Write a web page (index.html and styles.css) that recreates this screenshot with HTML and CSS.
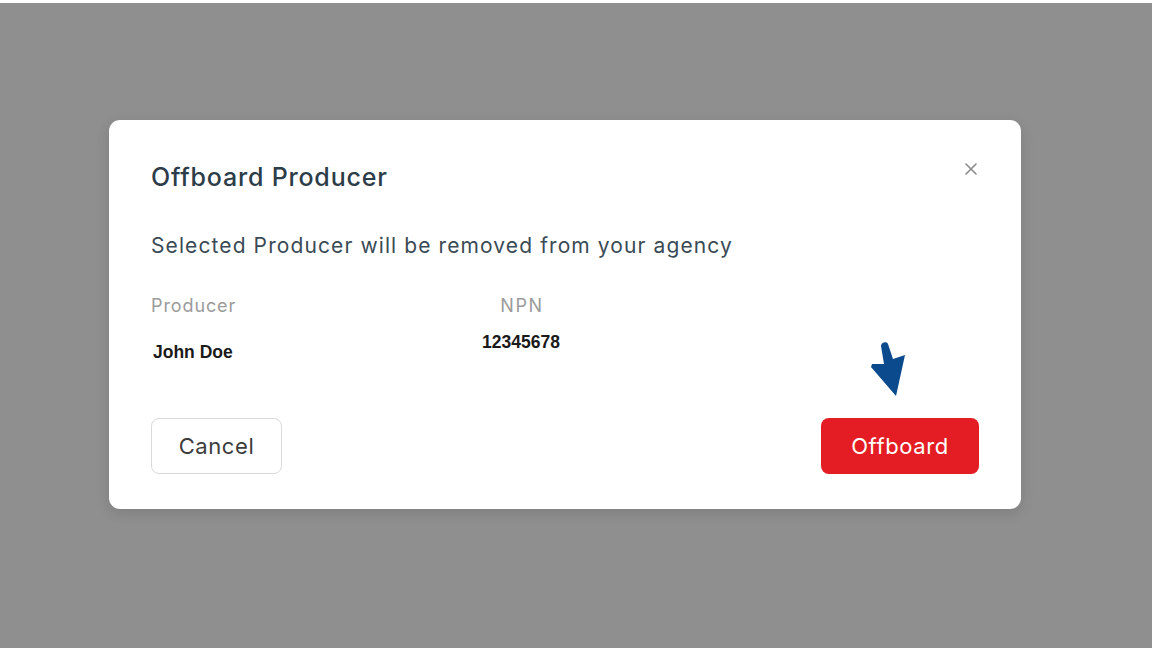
FILE: index.html
```html
<!DOCTYPE html>
<html lang="en">
<head>
<meta charset="utf-8">
<title>Offboard Producer</title>
<link rel="stylesheet" href="styles.css">
</head>
<body>
<div class="overlay">
  <div class="modal">
    <div class="modal-head">
      <h1 class="title">Offboard Producer</h1>
      <span class="close" aria-label="Close">
        <svg width="12" height="12" viewBox="0 0 12 12"><path d="M1 1L11 11M11 1L1 11" stroke="#8a8a8a" stroke-width="1.6" stroke-linecap="round"/></svg>
      </span>
    </div>
    <p class="subtitle">Selected Producer will be removed from your agency</p>
    <div class="info">
      <div class="col col-producer">
        <div class="label">Producer</div>
        <div class="value value-name">John Doe</div>
      </div>
      <div class="col col-npn">
        <div class="label">NPN</div>
        <div class="value value-npn">12345678</div>
      </div>
    </div>
    <div class="actions">
      <button class="btn btn-cancel">Cancel</button>
      <button class="btn btn-offboard">Offboard</button>
      <svg class="pointer" width="40" height="60" viewBox="0 0 40 60"><path d="M12 5 C12 1 18 0 19 3 L24 18 L36 14 L27 55 L2 26 L3 23 L15 23 Z" fill="#0b4a8c"/></svg>
    </div>
  </div>
</div>
</body>
</html>
```

FILE: styles.css
```css
* { box-sizing: border-box; }
html, body { margin: 0; padding: 0; }
body {
  background: #ffffff;
  font-family: "Inter", "Open Sans", sans-serif;
}
.overlay {
  margin-top: 3px;
  height: 645px;
  background: #8f8f8f;
  padding-top: 117px;
  padding-left: 109px;
}
.modal {
  width: 912px;
  height: 389px;
  background: #ffffff;
  border-radius: 11px;
  box-shadow: 0 4px 14px rgba(0,0,0,0.12);
  padding: 40px 42px 35px 42px;
  display: flex;
  flex-direction: column;
}
.modal-head {
  display: flex;
  justify-content: space-between;
  align-items: flex-start;
}
.title {
  margin: 0;
  font-size: 25px;
  line-height: 34px;
  font-weight: 500;
  color: #2c3c48;
  letter-spacing: 0.8px;
}
.close {
  margin-top: 3px;
  margin-right: 2px;
  width: 12px;
  height: 12px;
  display: flex;
}
.subtitle {
  margin: 37px 0 0 0;
  font-size: 21px;
  line-height: 30px;
  color: #3a4a55;
  font-weight: 400;
  letter-spacing: 1.1px;
}
.info {
  display: flex;
  margin-top: 32px;
}
.col-producer { width: 330px; }
.col-npn { width: 80px; text-align: center; }
.label {
  font-size: 18px;
  line-height: 26px;
  color: #9b9b9b;
  letter-spacing: 0.9px;
}
.col-npn .label { letter-spacing: 1.6px; padding-left: 2px; }
.value {
  font-family: "Liberation Sans", Arial, sans-serif;
  font-weight: 700;
  font-size: 17.5px;
  color: #1a1a1a;
}
.value-name { margin-top: 23px; margin-left: 2px; }
.value-npn { margin-top: 13px; }
.actions {
  margin-top: auto;
  display: flex;
  justify-content: space-between;
  position: relative;
}
.btn {
  height: 56px;
  border-radius: 8px;
  font-family: "Inter", "Open Sans", sans-serif;
  font-size: 22px;
  letter-spacing: 0.6px;
  cursor: pointer;
}
.btn-cancel {
  width: 131px;
  background: #ffffff;
  border: 1.5px solid #dadada;
  color: #3c3c3c;
}
.btn-offboard {
  width: 158px;
  background: #e41d24;
  border: none;
  color: #ffffff;
}
.pointer {
  position: absolute;
  left: 718px;
  top: -77px;
}
```
